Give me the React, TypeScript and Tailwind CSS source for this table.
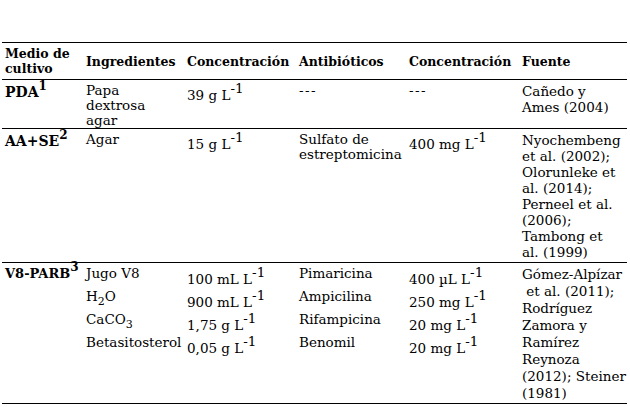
import React from 'react'

const cols = 'grid grid-cols-[81px_101px_112px_110px_113px_108px]'
const font = { fontFamily: '"DejaVu Serif", serif' }

function Sup({ children, bold = false }: { children: React.ReactNode; bold?: boolean }) {
  return (
    <span className={`relative -top-[7px] ${bold ? 'text-[12px] font-bold' : 'text-[13.5px]'}`}>{children}</span>
  )
}

function Sub({ children }: { children: React.ReactNode }) {
  return <span className="relative top-[4px] text-[11px]">{children}</span>
}

function Lines({ items, lh = 'leading-[15px]' }: { items: React.ReactNode[]; lh?: string }) {
  return (
    <>
      {items.map((t, i) => (
        <span key={i} className={`block whitespace-pre ${lh}`}>
          {t}
        </span>
      ))}
    </>
  )
}

const conc = (v: string) => (
  <span className="whitespace-nowrap">
    {v} L<Sup>-1</Sup>
  </span>
)

const dashes = <span className="tracking-[1.5px]">---</span>

const v8Rows = [
  ['Jugo V8', conc('100 mL'), 'Pimaricina', conc('400 µL')],
  [
    <>
      H<Sub>2</Sub>O
    </>,
    conc('900 mL'),
    'Ampicilina',
    conc('250 mg'),
  ],
  [
    <>
      CaCO<Sub>3</Sub>
    </>,
    conc('1,75 g'),
    'Rifampicina',
    conc('20 mg'),
  ],
  ['Betasitosterol', conc('0,05 g'), 'Benomil', conc('20 mg')],
]

export default function App() {
  return (
    <div className="w-[630px] h-[407px] bg-white text-black pt-[42px] pl-[2px]" style={font}>
      <div className="w-[625px] border-t border-black text-[13.5px] leading-[15px]">
        {/* header */}
        <div className={`${cols} font-bold text-[12.5px] border-b border-black h-[37px]`}>
          <div className="pl-[3px] pt-[3px]">
            <Lines items={['Medio de', 'cultivo']} />
          </div>
          <div className="pl-[3px] self-center">Ingredientes</div>
          <div className="pl-[3px] self-center">Concentración</div>
          <div className="pl-[3px] self-center">Antibióticos</div>
          <div className="pl-[3px] self-center">Concentración</div>
          <div className="pl-[3px] self-center">Fuente</div>
        </div>

        {/* PDA */}
        <div className={`${cols} border-b border-black h-[49px]`}>
          <div className="pl-[3px] pt-[5px] font-bold text-[14px]">
            PDA<Sup bold>1</Sup>
          </div>
          <div className="pl-[3px] pt-[3px]">
            <Lines items={['Papa', 'dextrosa', 'agar']} />
          </div>
          <div className="pl-[3px] pt-[8px]">{conc('39 g')}</div>
          <div className="pl-[3px] pt-[3px]">{dashes}</div>
          <div className="pl-[3px] pt-[3px]">{dashes}</div>
          <div className="pl-[3px] pt-[3px]">
            <Lines items={['Cañedo y', 'Ames (2004)']} lh="leading-[16px]" />
          </div>
        </div>

        {/* AA+SE */}
        <div className={`${cols} border-b border-black h-[134px]`}>
          <div className="pl-[3px] pt-[5px] font-bold text-[14px] whitespace-nowrap">
            AA+SE<Sup bold>2</Sup>
          </div>
          <div className="pl-[3px] pt-[3px]">Agar</div>
          <div className="pl-[3px] pt-[8px]">{conc('15 g')}</div>
          <div className="pl-[3px] pt-[3px]">
            <Lines items={['Sulfato de', 'estreptomicina']} />
          </div>
          <div className="pl-[3px] pt-[8px]">{conc('400 mg')}</div>
          <div className="pl-[3px] pt-[3px]">
            <Lines
              lh="leading-[16px]"
              items={[
                'Nyochembeng',
                'et al. (2002);',
                'Olorunleke et',
                'al. (2014);',
                'Perneel et al.',
                '(2006);',
                'Tambong et',
                'al. (1999)',
              ]}
            />
          </div>
        </div>

        {/* V8-PARB */}
        <div className={`${cols} border-b border-black h-[141px]`}>
          <div className="pl-[3px] pt-[3px] font-bold text-[13px] whitespace-nowrap">
            V8-PARB<Sup bold>3</Sup>
          </div>
          <div className="col-span-4 grid grid-cols-[101px_112px_110px_113px] auto-rows-[23px] pt-[3px]">
            {v8Rows.map((r, i) => (
              <React.Fragment key={i}>
                <div className="pl-[3px]">{r[0]}</div>
                <div className="pl-[3px] pt-[6px]">{r[1]}</div>
                <div className="pl-[3px]">{r[2]}</div>
                <div className="pl-[3px] pt-[6px]">{r[3]}</div>
              </React.Fragment>
            ))}
          </div>
          <div className="pl-[3px] pt-[3px]">
            <Lines
              lh="leading-[17px]"
              items={[
                'Gómez-Alpízar',
                ' et al. (2011);',
                'Rodríguez',
                'Zamora y',
                'Ramírez',
                'Reynoza',
                '(2012); Steiner',
                '(1981)',
              ]}
            />
          </div>
        </div>
      </div>
    </div>
  )
}
